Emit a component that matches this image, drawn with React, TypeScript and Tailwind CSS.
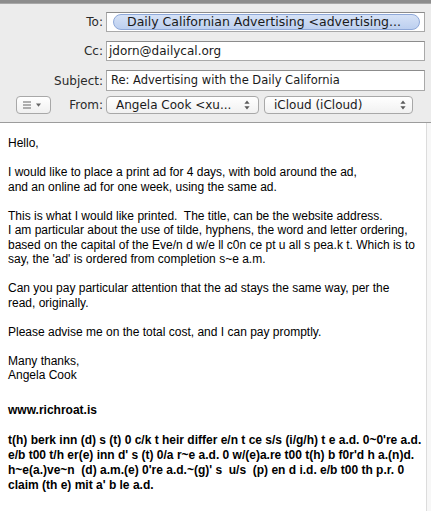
import React from "react";

function UpDown() {
  return (
    <svg width="6" height="10" viewBox="0 0 6 10" className="shrink-0">
      <path d="M3 0.5 L5.6 3.8 L0.4 3.8 Z" fill="#5a5a5a" />
      <path d="M3 9.5 L5.6 6.2 L0.4 6.2 Z" fill="#5a5a5a" />
    </svg>
  );
}

function MenuGlyph() {
  return (
    <svg width="22" height="8" viewBox="0 0 22 8">
      <rect x="0" y="0.5" width="8" height="1" fill="#666" />
      <rect x="0" y="3.5" width="8" height="1" fill="#666" />
      <rect x="0" y="6.5" width="8" height="1" fill="#666" />
      <path d="M13 2.5 L18 2.5 L15.5 5.8 Z" fill="#666" />
    </svg>
  );
}

const bodyLines: (string | null)[] = [
  "Hello,",
  null,
  "I would like to place a print ad for 4 days, with bold around the ad,",
  "and an online ad for one week, using the same ad.",
  null,
  "This is what I would like printed.  The title, can be the website address.",
  "I am particular about the use of tilde, hyphens, the word and letter ordering,",
  "based on the capital of the Eve/n d w/e ll c0n ce pt u all s pea.k t. Which is to",
  "say, the 'ad' is ordered from completion s~e a.m.",
  null,
  "Can you pay particular attention that the ad stays the same way, per the",
  "read, originally.",
  null,
  "Please advise me on the total cost, and I can pay promptly.",
  null,
  "Many thanks,",
  "Angela Cook",
];

const boldLines: (string | null)[] = [
  "www.richroat.is",
  null,
  "t(h) berk inn (d) s (t) 0 c/k t heir differ e/n t ce s/s (i/g/h) t e a.d. 0~0're a.d.",
  "e/b t00 t/h er(e) inn d' s (t) 0/a r~e a.d. 0 w/(e)a.re t00 t(h) b f0r'd h a.(n)d.",
  "h~e(a.)ve~n  (d) a.m.(e) 0're a.d.~(g)' s  u/s  (p) en d i.d. e/b t00 th p.r. 0",
  "claim (th e) mit a' b le a.d.",
];

export default function App() {
  return (
    <div className="w-[431px] h-[511px] overflow-hidden bg-white flex flex-col">
      {/* top bar */}
      <div className="h-[4px] bg-[#8d8d8d] border-b border-[#a8a8a8] shrink-0" />
      {/* header */}
      <div className="bg-[#ececec] flex flex-col pt-[8px] pb-[8px] font-['DejaVu_Sans',sans-serif] text-[12px] text-[#2a2a2a] border-b border-[#9c9c9c] shrink-0">
        {/* To */}
        <div className="flex items-center h-[20px]">
          <div className="w-[106px] text-right pr-[3px]">To:</div>
          <div className="w-[319px] h-[20px] bg-white border border-[#a9a9a9] border-t-[#8c8c8c] flex items-center pl-[6px] pr-[4px]">
            <div className="h-[16px] flex-1 rounded-full bg-gradient-to-b from-[#d6e2f6] to-[#bccfef] border border-[#8ea8d8] flex items-center pl-[13px] text-[12.5px] text-[#1a1a1a] whitespace-nowrap overflow-hidden">
              Daily Californian Advertising &lt;advertising...
            </div>
          </div>
        </div>
        {/* Cc */}
        <div className="flex items-center h-[20px] mt-[9px]">
          <div className="w-[106px] text-right pr-[3px]">Cc:</div>
          <div className="w-[319px] h-[20px] bg-white border border-[#a9a9a9] border-t-[#8c8c8c] flex items-center pl-[2px] text-[#1a1a1a]">
            jdorn@dailycal.org
          </div>
        </div>
        {/* Subject */}
        <div className="flex items-center h-[21px] mt-[9px]">
          <div className="w-[106px] text-right pr-[3px]">Subject:</div>
          <div className="w-[319px] h-[21px] bg-white border border-[#a9a9a9] border-t-[#8c8c8c] flex items-center pl-[4px] text-[11.5px] text-[#1a1a1a] whitespace-nowrap">
            Re: Advertising with the Daily California
          </div>
        </div>
        {/* From */}
        <div className="flex items-center h-[18px] mt-[5px]">
          <div className="w-[106px] flex items-center">
            <div className="ml-[16px] w-[35px] h-[18px] rounded-[4px] border border-[#a8a8a8] bg-gradient-to-b from-white to-[#f0f0f0] flex items-center justify-center">
              <MenuGlyph />
            </div>
            <div className="flex-1 text-right pr-[3px]">From:</div>
          </div>
          <div className="w-[153px] h-[18px] rounded-[4px] border border-[#a8a8a8] bg-gradient-to-b from-white to-[#f1f1f1] flex items-center pl-[9px] pr-[8px] text-[#1a1a1a]">
            <span className="flex-1 whitespace-nowrap">Angela Cook &lt;xu...</span>
            <UpDown />
          </div>
          <div className="ml-[5px] w-[149px] h-[18px] rounded-[4px] border border-[#a8a8a8] bg-gradient-to-b from-white to-[#f1f1f1] flex items-center pl-[9px] pr-[6px] text-[#1a1a1a]">
            <span className="flex-1 whitespace-nowrap">iCloud (iCloud)</span>
            <UpDown />
          </div>
        </div>
      </div>
      {/* body */}
      <div className="flex-1 flex min-h-0">
        <div className="flex-1 pl-[8px] pt-[13px] font-['Liberation_Sans',Arial,sans-serif] text-[12px] leading-[14.5px] text-black">
          {bodyLines.map((l, i) => (
            <div key={i} className="h-[14.5px] whitespace-pre">
              {l ?? ""}
            </div>
          ))}
          <div className="h-[20px]" />
          <div className="font-bold leading-[15px]">
            {boldLines.map((l, i) => (
              <div key={i} className="h-[15px] whitespace-pre">
                {l ?? ""}
              </div>
            ))}
          </div>
        </div>
        <div className="w-[5px] border-l border-[#dcdcdc] bg-[#f7f7f7]" />
      </div>
    </div>
  );
}
